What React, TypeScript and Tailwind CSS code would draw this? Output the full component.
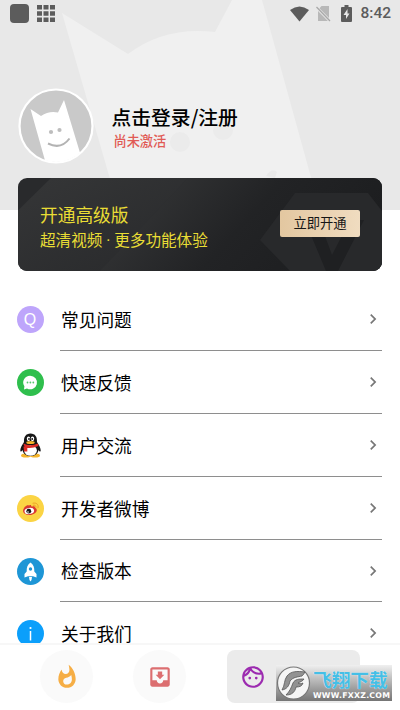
import React from 'react';
import { MdChevronRight, MdMoveToInbox, MdOutlineFace, MdWhatshot } from 'react-icons/md';

const StatusBar: React.FC = () => (
  <div className="relative flex h-7 items-center justify-between pl-[10px] pr-[9px] text-[#5c5c5c]">
    <div className="flex items-center gap-[8px]">
      <div className="mb-[1px] h-[19px] w-[19px] rounded-[4px] bg-[#5c5c5c]" />
      <svg className="mb-[1px] h-[17px] w-[18px]" viewBox="0 0 18 17" fill="currentColor">
        <path d="M0 0h5v4.500H0ZM6.500 0h5v4.500h-5ZM13 0h5v4.500h-5ZM0 6.200h5v4.500H0ZM6.500 6.200h5v4.500h-5ZM13 6.200h5v4.500h-5ZM0 12.400h5v4.500H0ZM6.500 12.400h5v4.500h-5ZM13 12.400h5v4.500h-5Z" />
      </svg>
    </div>
    <div className="flex items-center">
      <svg className="mb-[1px] h-4 w-[19px]" viewBox="0 0 19 16" fill="currentColor">
        <path d="M9.500 15.500 0 4Q9.500-3.200 19 4Z" />
      </svg>
      <svg className="ml-[7px] h-4 w-[15px]" viewBox="0 0 15 16">
        <path d="M5.500 0H13v15H2V4Z" fill="#b8b8b8" />
        <path d="m0 1 14 14" stroke="#e8e8e8" strokeWidth="3" />
        <path d="m.5 1 13.500 14" stroke="#a8a8a8" strokeWidth="1.300" />
      </svg>
      <svg className="ml-[10px] mb-[1px] h-[17px] w-[11px]" viewBox="0 0 11 17">
        <path d="M3.500 0h4v2H10q1 0 1 1v13q0 1-1 1H1q-1 0-1-1V3q0-1 1-1h2.500Z" fill="currentColor" />
        <path d="M6.500 4 2.500 10H5v4l3.500-5.500H6.500Z" fill="#e8e8e8" />
      </svg>
      <span className="ml-[8px] font-[Roboto,sans-serif] text-[15.500px] font-medium leading-none">8:42</span>
    </div>
  </div>
);

const HeaderBackdrop: React.FC = () => (
  <svg className="absolute inset-0 h-[210px] w-[400px]" viewBox="0 0 400 210">
    <path d="M62 13 128 54Q165 26 215 32L232 0H262L320 210H119Z" fill="#f0f0f0" />
    <circle cx="180" cy="142" r="10" fill="#ebebeb" />
    <circle cx="223" cy="130" r="10" fill="#ebebeb" />
    <path d="M266 176q6-9 11-4l-2 6Z" fill="#e9e9e9" />
  </svg>
);

const Avatar: React.FC = () => (
  <svg className="h-[76px] w-[76px] shrink-0" viewBox="0 0 76 76">
    <defs>
      <clipPath id="avatar">
        <circle cx="38" cy="38" r="36" />
      </clipPath>
    </defs>
    <circle cx="38" cy="38" r="36.500" fill="#c9c9c9" />
    <path
      clipPath="url(#avatar)"
      d="m12.500 21 10.500 7Q31 22.500 40 24.500L46 12 63 68 59 76H28Z"
      fill="#fff"
    />
    <circle cx="33" cy="44" r="2.100" fill="#bdbdbd" />
    <circle cx="41.500" cy="42" r="2.100" fill="#bdbdbd" />
    <path d="M30 55.500Q43 62 51.500 50.500" fill="none" stroke="#b3b3b3" strokeWidth="2" />
    <circle cx="38" cy="38" r="36.500" fill="none" stroke="#fff" strokeWidth="2.200" />
  </svg>
);

const PremiumCard: React.FC = () => (
  <div className="relative mx-[18px] -mt-8 h-[93px] overflow-hidden rounded-[9px] bg-[#292a2c]">
    <svg className="absolute inset-0 h-full w-full" viewBox="0 0 364 93" preserveAspectRatio="none">
      <defs>
        <linearGradient id="band" x1="0" y1="0" x2="1" y2="1">
          <stop offset="0" stopColor="#363738" />
          <stop offset="1" stopColor="#28292b" />
        </linearGradient>
        <linearGradient id="shade" x1="0" y1="0" x2="1" y2=".3">
          <stop offset="0" stopColor="#393a3b" />
          <stop offset=".6" stopColor="#222325" />
          <stop offset="1" stopColor="#1d1e20" />
        </linearGradient>
      </defs>
      <path d="M33 0H170L82 93H-20V52Z" fill="url(#band)" />
      <path d="M170 0H364V93H82Z" fill="url(#shade)" />
      <path d="M277 15h73l14 18v60h-92l-30-31Z" fill="#28292b" />
      <path d="M290 50h14l10 27 18-35h14L320 93h-12Z" fill="#1f2022" />
    </svg>
    <div className="relative flex h-full items-center justify-between pl-[22px] pr-[22px]">
      <div className="pt-[6px] text-[#e9dd35]">
        <div className="text-[17.700px] leading-[25px]">开通高级版</div>
        <div className="text-[15.600px] leading-[25px]">
          超清视频<span className="font-[Roboto,sans-serif]"> · </span>更多功能体验
        </div>
      </div>
      <button className="mb-[3px] h-[27px] w-[80px] rounded-[2px] bg-gradient-to-r from-[#e3c7a0] to-[#f0dcc0] text-[13.300px] leading-[26px] text-[#161616]">
        立即开通
      </button>
    </div>
  </div>
);

const QuestionIcon: React.FC = () => (
  <div className="flex h-[27px] w-[27px] items-center justify-center rounded-full bg-[#bea5fb] font-['Liberation_Sans',sans-serif] text-[16px] leading-none text-white">
    Q
  </div>
);

const FeedbackIcon: React.FC = () => (
  <svg className="h-[27px] w-[27px]" viewBox="0 0 27 27">
    <circle cx="13.500" cy="13.500" r="13.500" fill="#2fbf4d" />
    <path d="M13.200 6.700a6.800 6.800 0 1 1-3.200 12.800l-3 1 .4-3.200A6.800 6.800 0 0 1 13.200 6.700Z" fill="#fff" />
    <g fill="#55c76c">
      <circle cx="10.500" cy="13.500" r=".9" />
      <circle cx="13.400" cy="13.500" r=".9" />
      <circle cx="16.300" cy="13.500" r=".9" />
    </g>
  </svg>
);

const PenguinIcon: React.FC = () => (
  <svg className="h-[27px] w-[27px]" viewBox="0 0 27 27">
    <ellipse cx="9" cy="23.500" rx="5" ry="2.100" fill="#f5b52b" />
    <ellipse cx="18" cy="23.500" rx="5" ry="2.100" fill="#f5b52b" />
    <path
      d="M13.500 1.500C8.700 1.500 6.700 5 7 10c-1.500 2.500-3.700 5.500-3.700 8.200 0 2 1 1.700 2.200-.2C6.300 22 9.500 24 13.500 24s7.200-2 8-6c1.200 1.900 2.200 2.200 2.200.2 0-2.700-2.200-5.700-3.700-8.200.3-5-1.700-8.500-6.500-8.500Z"
      fill="#171717"
    />
    <ellipse cx="13.500" cy="18.500" rx="6.400" ry="5.200" fill="#fff" />
    <path d="M6.200 11.500q7.300 3.500 14.600 0l.7 2.500q-7 3-13.500 1.500Z" fill="#dc2d27" />
    <path d="M6.500 14.500h3.800v5H7Z" fill="#dc2d27" />
    <ellipse cx="11.500" cy="6.800" rx="1.700" ry="2.400" fill="#fff" />
    <ellipse cx="15.500" cy="6.800" rx="1.700" ry="2.400" fill="#fff" />
    <circle cx="12" cy="7" r=".9" fill="#111" />
    <circle cx="15.200" cy="7" r=".9" fill="#111" />
    <ellipse cx="13.500" cy="10.500" rx="4.200" ry="1.500" fill="#f5b52b" />
  </svg>
);

const WeiboIcon: React.FC = () => (
  <svg className="h-[27px] w-[27px]" viewBox="0 0 27 27">
    <circle cx="13.500" cy="13.500" r="13.500" fill="#fbd444" />
    <path
      d="M12 10.500c1-.9 2.600-.6 2.300 1.100 1.700-.7 4-.8 3.700 1.200 1.600.6 2 1.700 1.700 3-.7 2.600-4 4.200-7.300 4.200-3.700 0-6.500-1.800-6.300-4.500.2-2.700 3.800-6.500 5.900-5Z"
      fill="#d93831"
    />
    <ellipse cx="12.300" cy="16" rx="4.800" ry="3.100" fill="#fff" transform="rotate(-8 12.300 16)" />
    <circle cx="11.800" cy="16.200" r="2.400" fill="#171717" />
    <circle cx="11" cy="17" r=".8" fill="#fff" />
    <path d="M16 8.200c3.300-1 6 1.400 5 4.600M16.300 10.200c1.800-.4 3 .7 2.600 2.300" fill="none" stroke="#eea129" strokeWidth="1" strokeLinecap="round" />
  </svg>
);

const RocketIcon: React.FC = () => (
  <svg className="h-[27px] w-[27px]" viewBox="0 0 27 27">
    <circle cx="13.500" cy="13.500" r="13.500" fill="#1e96d6" />
    <path d="M13.500 4.500c3 2 4 5 3.800 9l2.200 2.500v3.500l-3.500-1.200h-5l-3.500 1.200V16l2.200-2.500c-.2-4 .8-7 3.800-9Z" fill="#fff" />
    <path d="M12 19h3l-.5 3-1 1.500-1-1.500Z" fill="#fff" />
    <circle cx="13.500" cy="11" r="1.700" fill="#1e96d6" />
  </svg>
);

const InfoIcon: React.FC = () => (
  <svg className="h-[27px] w-[27px]" viewBox="0 0 27 27">
    <circle cx="13.500" cy="13.500" r="13.500" fill="#0b9ffb" />
    <circle cx="13.500" cy="8" r="1.100" fill="#fff" />
    <path d="M13.500 11v9.500" stroke="#fff" strokeWidth="1.500" />
  </svg>
);

const menuItems = [
  { label: '常见问题', icon: <QuestionIcon /> },
  { label: '快速反馈', icon: <FeedbackIcon /> },
  { label: '用户交流', icon: <PenguinIcon /> },
  { label: '开发者微博', icon: <WeiboIcon /> },
  { label: '检查版本', icon: <RocketIcon /> },
  { label: '关于我们', icon: <InfoIcon /> },
];

const Watermark: React.FC = () => (
  <div className="absolute left-[276px] top-[20px] flex h-[36px] w-[116px] bg-gradient-to-b from-[#f0f0f0] to-[#757575]">
    <svg className="h-[36px] w-[35px] shrink-0" viewBox="0 0 35 36">
      <circle cx="17.500" cy="18" r="16" fill="#f5f5f5" stroke="#777" strokeWidth="1.200" />
      <path
        d="M29 7c-8-1-14-1-18 4-3 4-2 9-5 14 5-1 7-4 8-9 3-4 8-4 12-5 1-1 2-2 3-4Z"
        fill="#929292"
        stroke="#555"
        strokeWidth=".8"
      />
      <path
        d="M28 14c-5 0-9 0-11 4-2 5-3 8-7 12 6 0 9-3 10-8 4 0 6-1 7-4-2 1-4 1-5 0 2-1 5-2 6-4Z"
        fill="#929292"
        stroke="#555"
        strokeWidth=".8"
      />
    </svg>
    <div className="flex flex-col pl-[2px]">
      <span className="mt-[4px] h-[21px] whitespace-nowrap text-[18.700px] font-bold leading-[20px] text-[#45bfe6] [text-shadow:0_0_1px_white]">
        飞翔下载
      </span>
      <span className="mt-[1px] whitespace-nowrap font-['DejaVu_Sans',sans-serif] text-[7.800px] font-bold leading-[9px] tracking-[0.250px] text-white">
        WWW.FXXZ.COM
      </span>
    </div>
  </div>
);

const BottomNav: React.FC = () => (
  <nav className="absolute inset-x-0 bottom-0 h-[67px] border-t-2 border-[#f7f7f7] bg-white">
    <div className="flex pl-[40px] pt-[5px]">
      <div className="flex h-[53px] w-[53px] items-center justify-center rounded-full bg-[#fafafa] text-[#f6ae45]">
        <MdWhatshot className="h-[26px] w-[26px]" />
      </div>
      <div className="ml-[40px] flex h-[53px] w-[53px] items-center justify-center rounded-full bg-[#fafafa] text-[#dc6e70]">
        <MdMoveToInbox className="h-[26px] w-[26px]" />
      </div>
      <div className="ml-[41px] flex h-[53px] w-[133px] items-center rounded-[8px] bg-[#ebebeb] pl-[13px] text-[#9c2bb0]">
        <MdOutlineFace className="h-[26px] w-[26px]" />
      </div>
    </div>
    <Watermark />
  </nav>
);

export default function App() {
  return (
    <div className="relative h-[710px] w-[400px] overflow-hidden bg-white font-['Noto_Sans_CJK_SC',sans-serif] text-black">
      <header className="relative h-[210px] bg-[#e8e8e8]">
        <HeaderBackdrop />
        <StatusBar />
        <div className="relative flex pl-[17.500px] pt-[60px]">
          <Avatar />
          <div className="ml-[18px] pt-[16px]">
            <div className="text-[19.800px] font-medium leading-[26px]">点击登录/注册</div>
            <div className="pl-[2px] text-[13.200px] font-medium leading-[22px] text-[#e15b56]">尚未激活</div>
          </div>
        </div>
      </header>

      <PremiumCard />

      <div className="mt-[17.500px]">
        {menuItems.map((item) => (
          <div key={item.label} className="flex h-[62.800px] pl-[16.500px] pr-[17px]">
            <div className="flex w-[43.500px] shrink-0 items-center">{item.icon}</div>
            <div className="mr-[1px] flex flex-1 items-center justify-between border-b border-[#8e8e8e]">
              <span className="pl-[1px] text-[17.700px]">{item.label}</span>
              <MdChevronRight className="-mr-[1px] h-[20px] w-[20px] text-[#777]" />
            </div>
          </div>
        ))}
      </div>

      <BottomNav />
    </div>
  );
}
